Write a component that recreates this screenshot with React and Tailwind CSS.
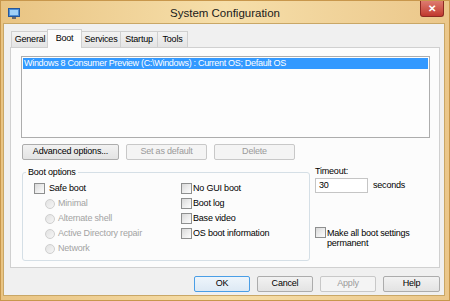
import React from 'react'

const font = { fontFamily: '"Liberation Sans", Arial, sans-serif' }

function Check({ className = '' }) {
  return (
    <span
      className={`inline-block w-[11px] h-[11px] shrink-0 border border-[#8e8f8f] bg-gradient-to-br from-[#d8d8d8] via-[#ececec] to-[#fdfdfd] ${className}`}
    />
  )
}

function Radio() {
  return (
    <span className="inline-block w-[10px] h-[10px] shrink-0 rounded-full border border-[#cfcfcf] bg-gradient-to-br from-[#e2e2e2] to-[#f6f6f6]" />
  )
}

function Button({ children, w, disabled, primary }) {
  let cls = 'border-[#acacac] bg-gradient-to-b from-[#f2f2f2] to-[#e3e3e3] text-black'
  if (disabled) cls = 'border-[#c8c8c8] bg-[#f4f4f4] text-[#9a9a9a]'
  if (primary) cls = 'border-[#4a9ee6] bg-gradient-to-b from-[#eef5fb] to-[#dde9f4] text-black'
  return (
    <div
      className={`h-[16px] flex items-center justify-center rounded-[2px] border text-[9px] tracking-[-0.2px] ${cls} ${w}`}
    >
      {children}
    </div>
  )
}

const tabs = [
  { label: 'General', w: 'w-[37px]' },
  { label: 'Boot', w: 'w-[35px]', active: true },
  { label: 'Services', w: 'w-[39px]' },
  { label: 'Startup', w: 'w-[37px]' },
  { label: 'Tools', w: 'w-[31px]' },
]

export default function App() {
  return (
    <div
      style={font}
      className="w-[450px] h-[301px] flex flex-col bg-gradient-to-r from-[#e9c483] via-[#f6dfaa] to-[#ebc78a] border border-[#c8974c] overflow-hidden"
    >
      {/* title bar */}
      <div className="h-[22px] shrink-0 flex items-center relative">
        <svg width="12" height="11" viewBox="0 0 12 11" className="ml-[7px] mt-[2px]">
          <rect x="0.5" y="0.5" width="11" height="8" fill="#4c8fd6" stroke="#27579a" />
          <rect x="2" y="2" width="8" height="5" fill="#9fd0f7" />
          <rect x="4" y="9" width="4" height="2" fill="#6a6a6a" />
        </svg>
        <div className="flex-1 text-center text-[11.5px] text-[#1a1a1a] mt-[3px] pl-[10px]">
          System Configuration
        </div>
        <div className="w-[24px] h-[16px] mr-[5px] self-start rounded-b-[3px] border border-t-0 border-[#8c2a22] bg-gradient-to-b from-[#dd7a6f] to-[#c1382e] flex items-center justify-center">
          <span className="text-white text-[10px] font-bold leading-none">✕</span>
        </div>
      </div>

      {/* client area */}
      <div className="flex-1 ml-[2px] mr-[4px] mb-[4px] bg-[#f0f0f0] border border-[#c9a766] flex flex-col pl-[6px] pr-[4px] text-[9px] tracking-[-0.2px] text-black">
        {/* tabs */}
        <div className="h-[23px] flex items-end pl-[1px]">
          {tabs.map((t) =>
            t.active ? (
              <div
                key={t.label}
                className={`${t.w} h-[19px] -mb-[1px] relative z-10 bg-[#fcfcfc] border border-b-0 border-[#d0d0d0] flex items-start justify-center pt-[2px] -mx-[1px]`}
              >
                {t.label}
              </div>
            ) : (
              <div
                key={t.label}
                className={`${t.w} h-[16px] bg-gradient-to-b from-[#f3f3f3] to-[#e4e4e4] border border-b-0 border-r-0 last:border-r border-[#d0d0d0] flex items-center justify-center`}
              >
                {t.label}
              </div>
            )
          )}
        </div>

        {/* panel */}
        <div className="h-[221px] bg-[#fcfcfc] border border-[#d0d0d0] pl-[10px] pr-[9px] pt-[8px]">
          <div className="h-[82px] border border-[#adadad] bg-[#fdfdfd] p-[1px]">
            <div className="h-[11px] bg-[#3399ff] text-white flex items-center pl-[1px] tracking-[-0.3px]">
              Windows 8 Consumer Preview (C:\Windows) : Current OS; Default OS
            </div>
          </div>

          <div className="flex gap-[7px] mt-[6px] ml-[1px]">
            <Button w="w-[97px]">Advanced options...</Button>
            <Button w="w-[81px]" disabled>
              Set as default
            </Button>
            <Button w="w-[81px]" disabled>
              Delete
            </Button>
          </div>

          <div className="flex items-start ml-[1px]">
            {/* boot options group */}
            <div className="relative w-[288px] h-[89px] mt-[12px] border border-[#d5dfe6] rounded-[3px] flex pt-[8px] pl-[11px]">
              <span className="absolute -top-[7px] left-[3px] bg-[#fcfcfc] px-[2px]">Boot options</span>
              <div className="w-[147px] flex flex-col">
                <div className="h-[15px] flex items-center gap-[4px]">
                  <Check />
                  <span>Safe boot</span>
                </div>
                {['Minimal', 'Alternate shell', 'Active Directory repair', 'Network'].map((r) => (
                  <div key={r} className="h-[15px] flex items-center gap-[3px] pl-[11px] text-[#a3a3a3]">
                    <Radio />
                    <span>{r}</span>
                  </div>
                ))}
              </div>
              <div className="flex flex-col">
                {['No GUI boot', 'Boot log', 'Base video', 'OS boot information'].map((c) => (
                  <div key={c} className="h-[15px] flex items-center gap-[1px]">
                    <Check />
                    <span>{c}</span>
                  </div>
                ))}
              </div>
            </div>

            {/* timeout column */}
            <div className="ml-[5px] mt-[6px] flex flex-col">
              <div className="h-[12px] flex items-center">Timeout:</div>
              <div className="flex items-center">
                <div className="w-[53px] h-[15px] border border-[#c5c5c5] bg-white flex items-center pl-[3px]">30</div>
                <span className="ml-[5px]">seconds</span>
              </div>
              <div className="flex items-start gap-[1px] mt-[34px]">
                <Check />
                <span className="leading-[10px] mt-[1px]">
                  Make all boot settings
                  <br />
                  permanent
                </span>
              </div>
            </div>
          </div>
        </div>

        {/* bottom buttons */}
        <div className="flex justify-end gap-[7px] mt-[8px]">
          <Button w="w-[56px]" primary>
            OK
          </Button>
          <Button w="w-[56px]">Cancel</Button>
          <Button w="w-[56px]" disabled>
            Apply
          </Button>
          <Button w="w-[57px]">Help</Button>
        </div>
      </div>
    </div>
  )
}
